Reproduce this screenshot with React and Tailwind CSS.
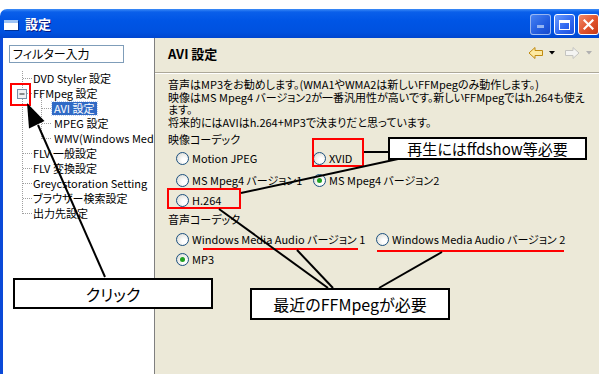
import React from "react";

const ff = "font-['Noto_Sans_CJK_JP','Noto_Sans',sans-serif] [font-feature-settings:'palt']";

function Radio({ checked }) {
  return (
    <span className="w-[13px] h-[13px] shrink-0 rounded-full border border-[#1c5180] bg-[radial-gradient(circle_at_65%_65%,#ffffff_20%,#d4d4cc_100%)] flex items-center justify-center">
      {checked && <span className="w-[5px] h-[5px] rounded-full bg-[#21a121]" />}
    </span>
  );
}

function RadioItem({ label, checked, w }) {
  return (
    <div className={`flex items-center gap-[3px] ${w || ""}`}>
      <Radio checked={checked} />
      <span className="whitespace-nowrap">{label}</span>
    </div>
  );
}

const treeItems = [
  { label: "DVD Styler 設定", level: 0 },
  { label: "FFMpeg 設定", level: 0 },
  { label: "AVI 設定", level: 1, selected: true },
  { label: "MPEG 設定", level: 1 },
  { label: "WMV(Windows Med", level: 1 },
  { label: "FLV 一般設定", level: 0 },
  { label: "FLV 変換設定", level: 0 },
  { label: "Greycstoration Setting", level: 0 },
  { label: "ブラウザー検索設定", level: 0 },
  { label: "出力先設定", level: 0 },
];

export default function App() {
  return (
    <div className={`relative w-[599px] h-[374px] overflow-hidden bg-white text-[11px] text-black ${ff}`}>
      <div className="mt-[9px] flex flex-col h-[365px]">
        {/* Title bar */}
        <div className="h-[29px] shrink-0 rounded-tl-[7px] bg-[linear-gradient(to_bottom,#3d8cf7_0px,#0a5fea_3px,#0055e5_40%,#0051df_80%,#0046cf_100%)] flex items-center pl-[4px]">
          <div className="w-[14px] h-[10px] bg-white border-t-[3px] border-[#9ec4f5] shadow-[1px_1px_0_#003399] mt-[2px]" />
          <span className="ml-[7px] text-white font-bold text-[13px] [text-shadow:1px_1px_0_#0a1883] mt-[1px]">設定</span>
          <div className="ml-auto flex items-center gap-[3px] mt-[2px]">
            <div className="w-[21px] h-[21px] rounded-[3px] border border-white/70 bg-[linear-gradient(135deg,#5a8ef5,#2a5fe0_60%,#1c48c8)] flex items-end justify-center pb-[6px] opacity-80">
              <div className="w-[7px] h-[3px] bg-[#b9cdf7]" />
            </div>
            <div className="w-[21px] h-[21px] rounded-[3px] border border-white bg-[linear-gradient(135deg,#6a9cff,#2e66ef_60%,#1c4fdc)] flex items-center justify-center">
              <div className="w-[11px] h-[10px] border border-white border-t-[3px]" />
            </div>
            <div className="w-[21px] h-[21px] rounded-[3px] border border-white bg-[linear-gradient(135deg,#f08a6a,#e0522c_55%,#c63a16)] flex items-center justify-center">
              <svg width="11" height="11" viewBox="0 0 11 11">
                <path d="M1.5 1.5 L9.5 9.5 M9.5 1.5 L1.5 9.5" stroke="white" strokeWidth="2.2" strokeLinecap="square" />
              </svg>
            </div>
          </div>
        </div>
        {/* Body */}
        <div className="flex flex-1 min-h-0 border-l-[3px] border-[#0a49d8]">
          {/* Left panel */}
          <div className="relative w-[152px] shrink-0 bg-white border-r border-[#7f7f7f] pt-[7px] pl-[6px] overflow-hidden">
            <div className="w-[115px] h-[18px] border border-[#7f9db9] pl-[3px] flex items-center leading-none text-[12px]">フィルター入力</div>
            <div className="relative mt-[8px]">
              <svg className="absolute left-0 top-0" width="150" height="160">
                <g stroke="#a0a0a0" strokeWidth="1" strokeDasharray="1 1">
                  <line x1="13.5" y1="0" x2="13.5" y2="143" />
                  {[0, 1, 5, 6, 7, 8, 9].map((i) => (
                    <line key={i} x1="14" y1={i * 15 + 7.5} x2="23" y2={i * 15 + 7.5} />
                  ))}
                  <line x1="32.5" y1="23" x2="32.5" y2="68" />
                  {[2, 3, 4].map((i) => (
                    <line key={i} x1="33" y1={i * 15 + 7.5} x2="42" y2={i * 15 + 7.5} />
                  ))}
                </g>
                <rect x="8.5" y="18.5" width="9" height="9" fill="#eef0f3" stroke="#7a8ea8" />
                <line x1="10.5" y1="23" x2="15.5" y2="23" stroke="#222" strokeWidth="1" />
              </svg>
              <div className="relative flex flex-col">
                {treeItems.map((it) => (
                  <div key={it.label} className={`h-[15px] flex items-center ${it.level === 0 ? "pl-[22px]" : "pl-[43px]"}`}>
                    <span
                      className={`whitespace-nowrap leading-none px-[2px] py-[1px] ${
                        it.selected ? "bg-[#316ac5] text-white outline outline-1 outline-dotted outline-[#c0d0f0]" : ""
                      }`}
                    >
                      {it.label}
                    </span>
                  </div>
                ))}
              </div>
            </div>
          </div>
          {/* Right panel */}
          <div className="flex-1 min-w-0 overflow-hidden bg-[#ece9d8] flex flex-col">
            <div className="h-[35px] shrink-0 flex items-center pl-[13px] pr-[7px] border-b border-[#aca899]">
              <span className="font-bold text-[13px] mt-[-3px]">AVI 設定</span>
              <div className="ml-auto flex items-center mt-[-4px]">
                <svg width="16" height="14" viewBox="0 0 16 14">
                  <path d="M1 7 L7 1.5 L7 4.5 L14.5 4.5 L14.5 9.5 L7 9.5 L7 12.5 Z" fill="#fde9a0" stroke="#c08a10" strokeWidth="1" strokeLinejoin="round" />
                </svg>
                <svg className="ml-[5px]" width="6" height="4" viewBox="0 0 6 4"><path d="M0 0 L6 0 L3 3.5 Z" fill="#000" /></svg>
                <svg className="ml-[9px]" width="16" height="14" viewBox="0 0 16 14">
                  <path d="M15 7 L9 1.5 L9 4.5 L1.5 4.5 L1.5 9.5 L9 9.5 L9 12.5 Z" fill="#f4f4f2" stroke="#c4c4c0" strokeWidth="1" strokeLinejoin="round" />
                </svg>
                <svg className="ml-[6px]" width="6" height="4" viewBox="0 0 6 4"><path d="M0 0 L6 0 L3 3.5 Z" fill="#b0b0b0" /></svg>
              </div>
            </div>
            <div className="border-t border-white pl-[13px] pt-[4px] leading-[12.5px] whitespace-nowrap">
              <div>音声はMP3をお勧めします。(WMA1やWMA2は新しいFFMpegのみ動作します。)</div>
              <div>映像はMS Mpeg4 バージョン2が一番汎用性が高いです。新しいFFMpegではh.264も使え</div>
              <div>ます。</div>
              <div>将来的にはAVIはh.264+MP3で決まりだと思っています。</div>
              <div className="mt-[4px] h-[15px] flex items-center">映像コーデック</div>
              <div className="pl-[8px] flex flex-col">
                <div className="h-[22px] flex items-center">
                  <RadioItem label="Motion JPEG" w="w-[137px]" />
                  <RadioItem label="XVID" />
                </div>
                <div className="h-[22px] flex items-center">
                  <RadioItem label="MS Mpeg4 バージョン1" w="w-[137px]" />
                  <RadioItem label="MS Mpeg4 バージョン2" checked />
                </div>
                <div className="h-[19px] flex items-center">
                  <RadioItem label="H.264" />
                </div>
              </div>
              <div className="h-[19px] flex items-center">音声コーデック</div>
              <div className="pl-[8px] flex flex-col">
                <div className="h-[20px] flex items-center">
                  <RadioItem label="Windows Media Audio バージョン 1" w="w-[200px]" />
                  <RadioItem label="Windows Media Audio バージョン 2" />
                </div>
                <div className="h-[20px] flex items-center">
                  <RadioItem label="MP3" checked />
                </div>
              </div>
            </div>
          </div>
        </div>
      </div>

      {/* Annotations */}
      <svg className="absolute left-0 top-0 pointer-events-none" width="599" height="374">
        <g fill="none" stroke="#ff0000" strokeWidth="2">
          <rect x="11" y="84" width="19" height="21" />
          <rect x="313" y="139" width="50" height="27" />
          <rect x="168" y="189" width="72" height="19" />
          <line x1="203" y1="249" x2="358" y2="249" />
          <line x1="377" y1="251" x2="564" y2="251" />
        </g>
        <g stroke="#000" strokeWidth="2">
          <line x1="364" y1="152" x2="388" y2="152" />
          <line x1="241" y1="193" x2="398" y2="159" />
          <line x1="219" y1="209" x2="328" y2="288" />
          <line x1="297" y1="250" x2="333" y2="288" />
          <line x1="442" y1="252" x2="379" y2="288" />
          <line x1="105" y1="277" x2="38" y2="125" />
        </g>
        <polygon points="27,103 44.5,121 29,128.5" fill="#000" />
      </svg>
      <div className="absolute left-[388px] top-[137px] w-[199px] h-[23px] border-2 border-black bg-white flex items-center justify-center text-[15px] leading-none">
        再生にはffdshow等必要
      </div>
      <div className="absolute left-[13px] top-[278px] w-[200px] h-[31px] border-2 border-black bg-white flex items-center justify-center text-[16px] leading-none">
        クリック
      </div>
      <div className="absolute left-[250px] top-[288px] w-[200px] h-[32px] border-2 border-black bg-white flex items-center justify-center text-[16px] leading-none">
        最近のFFMpegが必要
      </div>
    </div>
  );
}
